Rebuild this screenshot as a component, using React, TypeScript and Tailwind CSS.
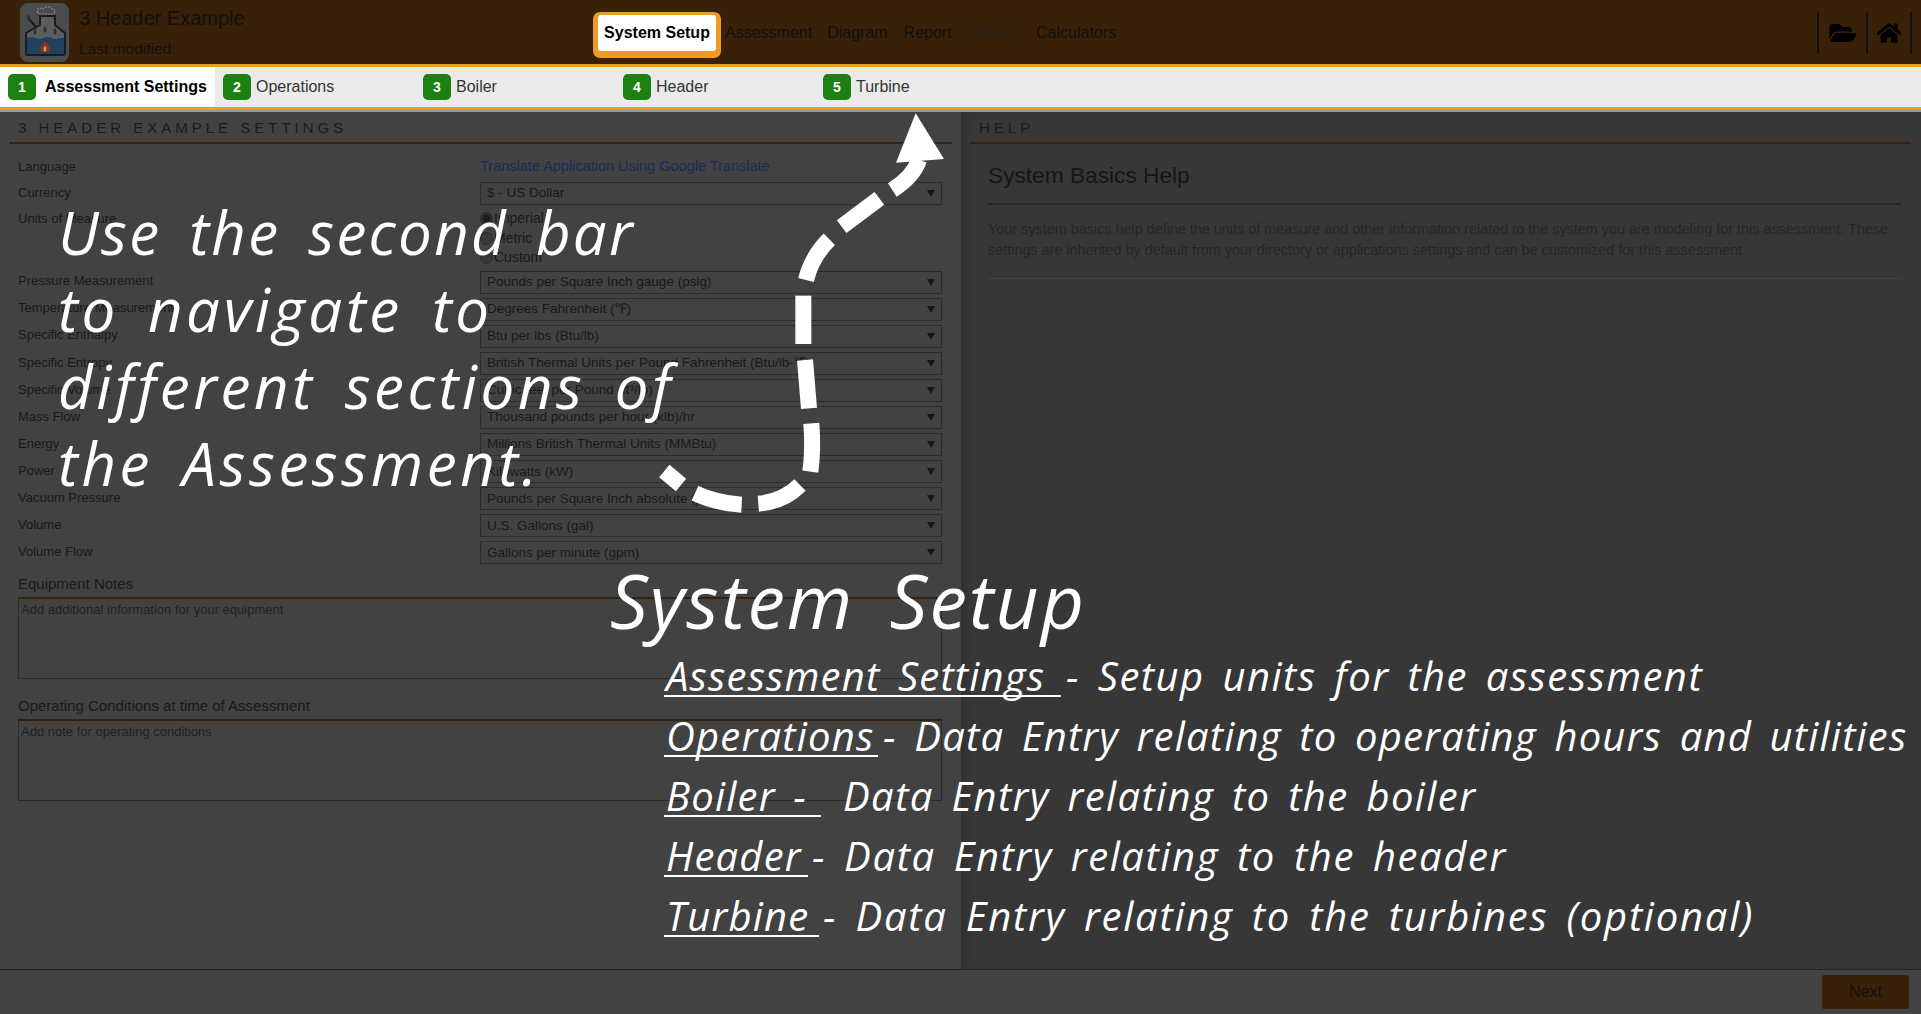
import React from "react";

const selects: [string, string][] = [
  ["Pressure Measurement", "Pounds per Square Inch gauge (psig)"],
  ["Temperature Measurement", "Degrees Fahrenheit (℉)"],
  ["Specific Enthalpy", "Btu per lbs (Btu/lb)"],
  ["Specific Entropy", "British Thermal Units per Pound Fahrenheit (Btu/lb-℉)"],
  ["Specific Volume", "Cubic feet per Pound (ft³/lb)"],
  ["Mass Flow", "Thousand pounds per hour (klb)/hr"],
  ["Energy", "Millions British Thermal Units (MMBtu)"],
  ["Power", "Kilowatts (kW)"],
  ["Vacuum Pressure", "Pounds per Square Inch absolute (psia)"],
  ["Volume", "U.S. Gallons (gal)"],
  ["Volume Flow", "Gallons per minute (gpm)"],
];

const steps = [
  { n: 2, label: "Operations" },
  { n: 3, label: "Boiler" },
  { n: 4, label: "Header" },
  { n: 5, label: "Turbine" },
];

const notes: [string, string, string, string][] = [
  ["Assessment Settings", "w-[397px]", "ml-[5px] tracking-[1.470px]", "- Setup units for the assessment"],
  ["Operations", "w-[214px]", "ml-[5px]", "- Data Entry relating to operating hours and utilities"],
  ["Boiler -", "w-[157px]", "ml-[22px] tracking-[1.400px]", "Data Entry relating to the boiler"],
  ["Header", "w-[144px]", "ml-[4px] tracking-[1.600px]", "- Data Entry relating to the header"],
  ["Turbine", "w-[155px]", "ml-[4px] tracking-[1.770px]", "- Data Entry relating to the turbines (optional)"],
];

function Badge({ n }: { n: number }) {
  return (
    <span className="flex h-[26px] w-[28px] shrink-0 items-center justify-center rounded-[5px] bg-[#1c8112] text-sm font-bold text-white">
      {n}
    </span>
  );
}

function SelectBox({ value }: { value: string }) {
  return (
    <div className="flex h-[23px] w-[462px] items-center justify-between border border-[#2c2c2c] pl-1.5 pr-[6px] text-[13.5px] text-[#191919]">
      <span className="truncate">{value}</span>
      <span className="h-0 w-0 border-x-[4px] border-t-[7px] border-x-transparent border-t-[#161616]" />
    </div>
  );
}

function Logo() {
  return (
    <div className="mt-[3px] h-[59px] w-[49px] shrink-0 rounded-[8px] bg-[#4a4c4e]">
      <svg viewBox="0 0 49 59" className="h-full w-full">
        <path d="M6 30 L20 22 V13 H35 V22 L45 30 V50 Q45 52 43 52 H8 Q6 52 6 50 Z" fill="#5b5d5f" stroke="#1b1b1b" strokeWidth="2" />
        <path d="M7 35 Q11 33 15 35 T23 35 T31 35 T39 35 L44 35 V51 H7 Z" fill="#22405e" />
        <path d="M25 38 C29 42 31 45 29 49 H21 C19 45 22 42 25 38 Z" fill="#93311f" />
        <path d="M25 43 C27 45 27 47 25 49 C23 47 23 45 25 43 Z" fill="#c9a36a" />
        <path d="M15 25 q3 4 0 7 q-3 -3 0 -7 M25 23 q3 4 0 7 q-3 -3 0 -7 M35 25 q3 4 0 7 q-3 -3 0 -7" fill="#2c2e30" />
        <path d="M18 10 C16 6 20 4 23 6 C25 3 31 3 32 6 C36 6 36 11 32 11 H20 Z" fill="none" stroke="#8a8a8a" strokeWidth="1.200" strokeDasharray="2 1" />
        <path d="M9 16 L16 24" stroke="#1b1b1b" strokeWidth="2" />
        <path d="M7 11 q5 3 4 9 q-5 -3 -4 -9" fill="#2c2e30" />
      </svg>
    </div>
  );
}

function Arrow() {
  return (
    <svg viewBox="0 0 1080 1260" className="absolute left-[620px] top-[100px] h-[420px] w-[360px]" fill="none" stroke="white" strokeWidth="48">
      <path d="M133 1113 L183 1155" />
      <path d="M225 1180 Q290 1210 365 1214" />
      <path d="M415 1211 Q490 1205 540 1155" />
      <path d="M571 1115 Q580 1050 574 970" />
      <path d="M567 925 L555 780" />
      <path d="M550 732 L550 587" />
      <path d="M558 540 Q575 470 628 418" />
      <path d="M665 380 L778 295" />
      <path d="M817 270 Q880 230 897 180" />
      <polygon points="887,40 972,177 828,188" fill="white" stroke="none" />
    </svg>
  );
}

export default function App() {
  return (
    <div className="relative flex h-[1014px] w-[1921px] flex-col overflow-hidden bg-[#424242] font-['Liberation_Sans',sans-serif]">
      {/* top nav */}
      <div className="flex h-[67px] shrink-0 border-b-[3px] border-[#ee9c20] bg-[#392008]">
        <div className="ml-5 flex w-[573px] shrink-0">
          <Logo />
          <div className="ml-2.5 text-[#111]">
            <div className="mt-[5px] text-[20px] leading-[26px]">3 Header Example</div>
            <div className="mt-[8px] text-[15.5px] leading-5">Last modified:</div>
          </div>
        </div>
        <div className="flex items-start text-base text-[#111]">
          <div className="mt-3 flex h-[46px] w-[128px] items-start rounded-[7px] bg-[#ee9c20] pl-[5px] pt-[3px]">
            <div className="flex h-[36px] w-[118px] items-center justify-center rounded-[3px] bg-white font-bold text-black">
              System Setup
            </div>
          </div>
          <span className="ml-1 mt-[21px]">Assessment</span>
          <span className="ml-[15px] mt-[21px]">Diagram</span>
          <span className="ml-[16px] mt-[21px]">Report</span>
          <span className="ml-[16px] mt-[21px] text-[#2b2519]">Sankey</span>
          <span className="ml-[15px] mt-[21px]">Calculators</span>
        </div>
        <div className="ml-auto mt-3 flex h-[42px] text-black">
          <div className="flex w-[49px] items-center justify-center border-l-2 border-[#111]">
            <svg viewBox="0 0 576 512" className="h-[24px] w-[30px]" fill="currentColor">
              <path d="M572.7 292.1 500.3 416.2A64 64 0 0 1 445 448H45c-18.500 0-30.100-20.100-20.700-36.100l72.400-124.200A64 64 0 0 1 152 256h400c18.500 0 30.100 20.100 20.700 36.100zM152 224h328v-48c0-26.500-21.500-48-48-48H272l-64-64H48C21.500 64 0 85.500 0 112v278l69.100-118.400C86.200 242.300 118 224 152 224z" />
            </svg>
          </div>
          <div className="flex w-[46px] items-center justify-center border-x-2 border-[#111]">
            <svg viewBox="0 0 576 512" className="h-[22px] w-[26px]" fill="currentColor">
              <path d="M280.400 148.300 96 300.100V464a16 16 0 0 0 16 16l112-.3a16 16 0 0 0 15.900-16V368a16 16 0 0 1 16-16h64a16 16 0 0 1 16 16v95.600a16 16 0 0 0 16 16.100L464 480a16 16 0 0 0 16-16V300L295.700 148.300a12.200 12.200 0 0 0-15.300 0zM571.600 251.500 488 182.600V44a12 12 0 0 0-12-12h-56a12 12 0 0 0-12 12v72.600L318.500 43a48 48 0 0 0-61 0L4.300 251.500a12 12 0 0 0-1.600 16.900l25.500 31A12 12 0 0 0 45.200 301l235.200-193.700a12.200 12.200 0 0 1 15.300 0L530.900 301a12 12 0 0 0 16.900-1.600l25.500-31a12 12 0 0 0-1.700-17z" />
            </svg>
          </div>
          <div className="w-[9px]" />
        </div>
      </div>

      {/* second bar */}
      <div className="flex h-[43px] shrink-0 border-b-[3px] border-[#ee9c20] bg-[#ebebeb] text-base text-[#333]">
        <div className="flex w-[215px] items-center gap-[9px] whitespace-nowrap bg-white pl-2 font-bold text-black">
          <Badge n={1} />
          Assessment Settings
        </div>
        {steps.map((step) => (
          <div key={step.n} className="flex w-[200px] items-center gap-[5px] pl-2">
            <Badge n={step.n} />
            {step.label}
          </div>
        ))}
      </div>
      <div className="h-0.5 shrink-0 bg-[#9a9a9a]" />

      {/* panels */}
      <div className="flex min-h-0 flex-1">
        <div className="w-[961px] shrink-0 px-[9px] text-[13px] text-[#191919]">
          <div className="h-[32px] border-b-2 border-[#392008] pl-[9px] pt-[8px] text-[15px] leading-4 tracking-[4px] text-[#1c1c1c]">
            3 HEADER EXAMPLE SETTINGS
          </div>
          <div className="pl-[9px] pr-[10px]">
            <div className="mt-[13px] flex h-[20px] items-center justify-between">
              <span>Language</span>
              <span className="w-[462px] text-[14.5px] text-[#1b2b59]">Translate Application Using Google Translate</span>
            </div>
            <div className="mt-[5px] flex items-center justify-between">
              <span className="pb-0.5">Currency</span>
              <SelectBox value="$ - US Dollar" />
            </div>
            <div className="mt-1 flex justify-between">
              <span>Units of Measure</span>
              <div className="w-[462px] text-sm leading-[19.5px]">
                {["Imperial", "Metric", "Custom"].map((unit, i) => (
                  <div key={unit} className="flex items-center gap-[1px]">
                    <span className={`h-[13px] w-[13px] rounded-full border border-[#2c2c2c] ${i === 0 ? "border-[3px] bg-[#1b1b1b]" : "bg-[#383838]"}`} />
                    {unit}
                  </div>
                ))}
              </div>
            </div>
            <div className="mt-[3px] flex flex-col gap-[4.100px]">
              {selects.map(([label, value]) => (
                <div key={label} className="flex items-center justify-between">
                  <span className="pb-0.5">{label}</span>
                  <SelectBox value={value} />
                </div>
              ))}
            </div>
            <div className="mt-[10px] text-[15px] leading-5">Equipment Notes</div>
            <div className="mt-[3px] h-[82px] w-[924px] border border-[#2c2c2c] border-t-[#392008] border-t-2 px-[2px] py-px text-[13px] text-[#222]">
              Add additional information for your equipment
            </div>
            <div className="mt-[17px] text-[15px] leading-5">Operating Conditions at time of Assessment</div>
            <div className="mt-[3px] h-[82px] w-[924px] border border-[#2c2c2c] border-t-[#392008] border-t-2 px-[2px] py-px text-[13px] text-[#222]">
              Add note for operating conditions
            </div>
          </div>
        </div>
        <div className="flex-1 bg-[#373737] pl-[9px] pr-[10px] shadow-[inset_8px_0_8px_-6px_#2c2c2c]">
          <div className="h-[32px] border-b-2 border-[#392008] pl-[9px] pt-[8px] text-[15px] leading-4 tracking-[4px] text-[#1c1c1c]">
            HELP
          </div>
          <div className="px-[18px] pr-[10px] text-[#262626]">
            <div className="mt-[17px] text-[22.700px] leading-7 text-[#161616]">System Basics Help</div>
            <div className="mt-[14px] h-0.5 bg-[#262626]" />
            <p className="mt-[14px] text-[14.400px] leading-[21px]">
              Your system basics help define the units of measure and other information related to the system you are modeling for this assessment. These settings are inherited by default from your directory or applications settings and can be customized for this assessment.
            </p>
            <div className="mt-[17px] h-px bg-[#434343]" />
          </div>
        </div>
      </div>

      {/* footer */}
      <div className="flex h-[45px] shrink-0 items-center justify-end border-t border-[#222] bg-[#424242] pr-3">
        <div className="flex h-[34px] w-[87px] items-center justify-center rounded-[2px] bg-[#392008] text-base text-[#111]">Next</div>
      </div>

      {/* walkthrough overlay */}
      <Arrow />
      <div className="absolute left-[58px] top-[194px] whitespace-nowrap font-['Open_Sans',sans-serif] text-[60px] italic leading-[77px] tracking-[3.600px] text-white [word-spacing:10px]">
        <div className="tracking-[2.300px]">Use the second bar</div>
        <div>to navigate to</div>
        <div>different sections of</div>
        <div>the Assessment.</div>
      </div>
      <div className="absolute left-[610px] top-[556px] whitespace-nowrap font-['Open_Sans',sans-serif] text-[75px] italic leading-[88px] tracking-[2px] text-white [word-spacing:14px]">
        System Setup
      </div>
      <div className="absolute left-[664px] top-[646px] font-['Open_Sans',sans-serif] text-[40px] italic tracking-[1.200px] text-white [word-spacing:6px]">
        {notes.map(([name, width, gap, rest]) => (
          <div key={name} className="flex h-[60px] whitespace-nowrap leading-[60px]">
            <span className={`${width} h-[51px] shrink-0 border-b-2 border-white pl-[2px]`}>{name}</span>
            <span className={gap}>{rest}</span>
          </div>
        ))}
      </div>
    </div>
  );
}
